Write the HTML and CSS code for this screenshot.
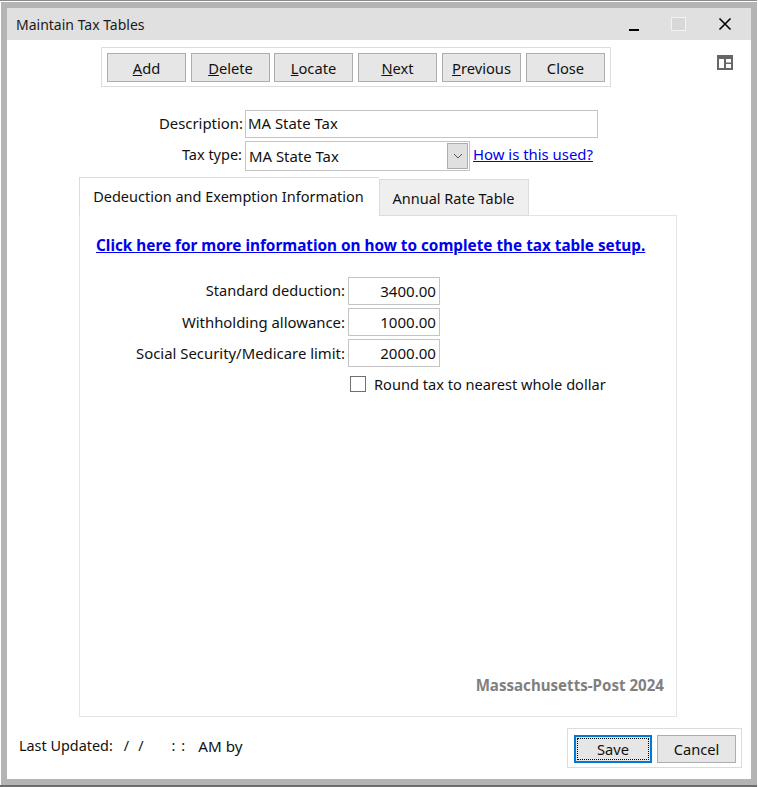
FILE: index.html
```html
<!DOCTYPE html>
<html lang="en">
<head>
<meta charset="utf-8">
<title>Maintain Tax Tables</title>
<link rel="stylesheet" href="styles.css">
</head>
<body>
<div class="window">
  <header class="titlebar">
    <span class="title">Maintain Tax Tables</span>
    <span class="winbtn minimize"></span>
    <span class="winbtn maximize"></span>
    <svg class="close-x" width="14" height="14" viewBox="0 0 14 14"><path d="M1.5 1.5L12.5 12.5M12.5 1.5L1.5 12.5" stroke="#000" stroke-width="1.6" fill="none"/></svg>
  </header>
  <main class="content">
    <svg class="layout-icon" width="16" height="16" viewBox="0 0 16 16"><rect x="0" y="1" width="16" height="15" fill="#666"/><rect x="2" y="5" width="5" height="9" fill="#fff"/><rect x="9" y="5" width="5" height="3.5" fill="#fff"/><rect x="9" y="10" width="5" height="4" fill="#fff"/></svg>
    <div class="toolbar">
      <button class="btn"><u>A</u>dd</button>
      <button class="btn"><u>D</u>elete</button>
      <button class="btn tight"><u>L</u>ocate</button>
      <button class="btn"><u>N</u>ext</button>
      <button class="btn"><u>P</u>revious</button>
      <button class="btn">Close</button>
    </div>
    <div class="form-row desc-row">
      <label class="top-label">Description:</label>
      <div class="textbox desc-box">MA State Tax</div>
    </div>
    <div class="form-row type-row">
      <label class="top-label type-label">Tax type:</label>
      <div class="select-box">
        <span class="select-value">MA State Tax</span>
        <span class="select-arrow"><svg width="10" height="6" viewBox="0 0 10 6"><path d="M1 1L5 5L9 1" stroke="#555" fill="none"/></svg></span>
      </div>
      <a class="link how-link" href="#">How is this used?</a>
    </div>
    <div class="tabs">
      <div class="tab active">Dedeuction and Exemption Information</div>
      <div class="tab">Annual Rate Table</div>
    </div>
    <section class="panel">
      <a class="link info-link" href="#">Click here for more information on how to complete the tax table setup.</a>
      <div class="field-row first"><label class="field-label narrow">Standard deduction:</label><div class="textbox num">3400.00</div></div>
      <div class="field-row"><label class="field-label">Withholding allowance:</label><div class="textbox num">1000.00</div></div>
      <div class="field-row"><label class="field-label">Social Security/Medicare limit:</label><div class="textbox num">2000.00</div></div>
      <div class="check-row"><span class="checkbox"></span><span>Round tax to nearest whole dollar</span></div>
      <div class="stamp">Massachusetts-Post 2024</div>
    </section>
    <footer class="footer">
      <div class="updated"><span>Last Updated:</span><span class="d1">/</span><span class="d2">/</span><span class="t1">:</span><span class="t2">:</span><span class="ampm">AM by</span></div>
      <div class="actions">
        <button class="btn default"><span class="focus">Save</span></button>
        <button class="btn">Cancel</button>
      </div>
    </footer>
  </main>
</div>
</body>
</html>
```
FILE: styles.css
```css
* { box-sizing: border-box; }
html, body { margin: 0; padding: 0; background: #fff; }
body {
  width: 758px;
  height: 787px;
  overflow: hidden;
  font-family: "Noto Sans", "Open Sans", sans-serif;
  font-size: 14.9px;
  color: #111;
}
.window {
  width: 757px;
  height: 787px;
  border-top: 1px solid #8a8a8a;
  border-bottom: 2px solid #6e6e6e;
  padding: 1px 0 0 0;
  background: #fff;
}
.titlebar {
  height: 38px;
  margin-left: 1px;
  border-style: solid;
  border-color: #b4b4b4;
  border-width: 6px 6px 0 6px;
  background: #e0e0e0;
  display: flex;
  align-items: center;
  padding-left: 9px;
  position: relative;
}
.title { font-size: 14px; color: #1a1a1a; }
.winbtn { position: absolute; }
.minimize { left: 622px; top: 21px; width: 10px; height: 2px; background: #000; }
.maximize { left: 664px; top: 9px; width: 15px; height: 14px; background: #d8d8d8; border: 1px solid #f2f2f2; }
.close-x { position: absolute; left: 711px; top: 9px; }
.content {
  position: relative;
  height: 745px;
  margin-left: 1px;
  border-style: solid;
  border-color: #b4b4b4;
  border-width: 0 6px 6px 6px;
  background: #fff;
  padding-top: 7px;
}
.layout-icon { position: absolute; left: 710px; top: 14px; }
.toolbar {
  width: 510px;
  height: 40px;
  margin-left: 94px;
  border: 1px solid #dcdcdc;
  display: flex;
  gap: 5px;
  align-items: flex-start;
  padding: 5px 5px 0;
}
.btn {
  width: 79px;
  height: 29px;
  background: #e6e6e6;
  border: 1px solid #adadad;
  font: inherit;
  font-size: 14.7px;
  color: #111;
  padding: 0;
}
.btn.tight { margin-left: -1px; }
.form-row { display: flex; }
.top-label { width: 238px; text-align: right; padding-right: 2px; }
.type-label { font-size: 14.5px; padding-right: 3px; }
.textbox {
  height: 28px;
  border: 1px solid #c4c4c4;
  background: #fff;
  line-height: 24px;
  padding: 0 2px;
}
.desc-row { margin-top: 23px; height: 28px; line-height: 26px; }
.desc-box { width: 353px; }
.type-row { margin-top: 3px; height: 30px; line-height: 26px; }
.select-box {
  width: 225px;
  height: 30px;
  border: 1px solid #c4c4c4;
  display: flex;
  justify-content: space-between;
  padding: 1px 1px 1px 3px;
}
.select-value { line-height: 26px; }
.select-arrow {
  width: 21px;
  height: 26px;
  background: #e0e0e0;
  border: 1px solid #adadad;
  display: flex;
  align-items: center;
  justify-content: center;
}
.link { color: #0000ee; text-decoration: underline; }
.how-link { margin-left: 3px; }
.tabs { display: flex; align-items: flex-end; margin: 6px 0 0 72px; height: 39px; position: relative; z-index: 1; }
.tab {
  position: relative;
  width: 150px;
  height: 37px;
  background: #efefef;
  border: 1px solid #dcdcdc;
  line-height: 37px;
  text-align: center;
  font-size: 14.5px;
  padding-right: 1px;
}
.tab.active {
  z-index: 2;
  width: 300px;
  height: 39px;
  background: #fff;
  border-bottom: 0;
  border-right: 0;
  line-height: 37px;
  padding-right: 2px;
}
.panel {
  position: relative;
  width: 598px;
  height: 502px;
  margin: -1px 0 0 72px;
  border: 1px solid #e4e4e4;
  padding-top: 17px;
}
.info-link { display: block; margin-left: 16px; font-weight: 700; font-size: 15.3px; line-height: 24px; }
.field-row { display: flex; height: 28px; margin-top: 3px; line-height: 28px; }
.field-row.first { margin-top: 20px; }
.field-label { width: 268px; text-align: right; padding-right: 3px; flex: none; }
.field-label.narrow { font-size: 14.6px; line-height: 26px; }
.num { width: 92px; text-align: right; padding-right: 3px; line-height: 26px; font-size: 15.1px; }
.check-row { display: flex; align-items: center; margin: 7px 0 0 270px; height: 20px; gap: 8px; font-size: 14.6px; }
.checkbox { width: 16px; height: 16px; border: 1px solid #707070; background: #fff; flex: none; }
.stamp { position: absolute; right: 12px; top: 459px; font-weight: 700; color: #808080; font-size: 15.1px; }
.footer { display: flex; justify-content: space-between; align-items: flex-start; margin-top: 11px; padding-left: 12px; }
.updated { display: flex; height: 28px; margin-top: 4px; line-height: 28px; font-size: 14.4px; }
.d1 { margin-left: 11px; }
.d2 { margin-left: 9px; }
.t1 { margin-left: 28px; }
.t2 { margin-left: 6px; }
.ampm { margin-left: 13px; font-size: 15.2px; }
.actions {
  width: 175px;
  height: 40px;
  margin-right: 9px;
  border: 1px solid #dcdcdc;
  display: flex;
  justify-content: space-between;
  padding: 6px 5px 0 6px;
}
.actions .btn { height: 28px; }
.btn.default { width: 78px; border: 2px solid #0078d7; padding: 1px; }
.focus { display: block; height: 100%; border: 1px dotted #000; line-height: 20px; }
```
